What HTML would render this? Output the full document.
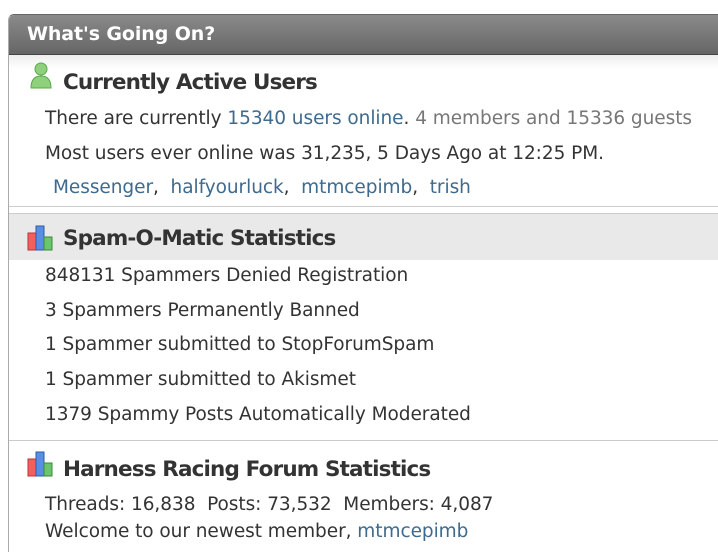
<!DOCTYPE html>
<html style="overflow:hidden"><head><style>
html,body{margin:0;width:718px;height:552px;overflow:hidden}
body{background:#fff;position:relative;font-family:"DejaVu Sans","Liberation Sans",sans-serif;color:#333}
.box{position:absolute;left:8px;top:14px;width:720px;height:540px;border-left:1px solid #aaa;border-top:1px solid #666;border-radius:6px 0 0 0;background:#fff}
.hdr{position:absolute;left:9px;top:15px;width:720px;height:39px;background:linear-gradient(#8a8a8a,#666);border-radius:5px 0 0 0;border-bottom:1px solid #444}
.hdr span{position:absolute;left:18px;top:8px;color:#fff;font-weight:bold;font-size:19px;letter-spacing:-0.1px}
.t{position:absolute;white-space:nowrap;font-size:18.5px;letter-spacing:-0.05px}
.h{position:absolute;white-space:nowrap;font-size:21.5px;font-weight:bold;color:#333;letter-spacing:-0.85px}
a{color:#3e6a8e;text-decoration:none}
.g{color:#777}
.line{position:absolute;left:9px;width:710px;height:1px;background:#ccc}
</style></head><body>
<div class="box"></div>
<div class="hdr"><span>What's Going On?</span></div>
<div style="position:absolute;left:9px;top:55px;width:710px;height:14px;background:linear-gradient(#eee,#fff)"></div>
<svg style="position:absolute;left:29px;top:61px" width="24" height="30"><circle cx="12" cy="8" r="6" fill="#8fd07c" stroke="#5aa94a"/><path d="M2 27 Q2 15 12 15 Q22 15 22 27 Z" fill="#8fd07c" stroke="#5aa94a"/></svg>
<div class="h" style="left:63px;top:70px">Currently Active Users</div>
<div class="t" style="left:45px;top:108px">There are currently <a>15340 users online</a>. <span class="g">4 members and 15336 guests</span></div>
<div class="t" style="left:45px;top:143px">Most users ever online was 31,235, 5 Days Ago at 12:25 PM.</div>
<div class="t" style="left:53px;top:177px"><a>Messenger</a>, &nbsp;<a>halfyourluck</a>, &nbsp;<a>mtmcepimb</a>, &nbsp;<a>trish</a></div>
<div class="line" style="top:206px"></div>
<div class="line" style="top:213px"></div>
<div style="position:absolute;left:9px;top:214px;width:710px;height:46px;background:#e9e9e9"></div>
<svg style="position:absolute;left:27px;top:225px" width="28" height="26"><rect x="1" y="8" width="8" height="17" fill="#f06060" stroke="#b33"/><rect x="9" y="1" width="8" height="24" fill="#5a8ee0" stroke="#2a5cb0"/><rect x="17" y="12" width="8" height="13" fill="#6cc46c" stroke="#3a8a3a"/></svg>
<div class="h" style="left:63px;top:226px">Spam-O-Matic Statistics</div>
<div class="t" style="left:45px;top:265px">848131 Spammers Denied Registration</div>
<div class="t" style="left:45px;top:300px">3 Spammers Permanently Banned</div>
<div class="t" style="left:45px;top:334px">1 Spammer submitted to StopForumSpam</div>
<div class="t" style="left:45px;top:369px">1 Spammer submitted to Akismet</div>
<div class="t" style="left:45px;top:404px">1379 Spammy Posts Automatically Moderated</div>
<div class="line" style="top:440px"></div>
<svg style="position:absolute;left:27px;top:451px" width="28" height="26"><rect x="1" y="8" width="8" height="17" fill="#f06060" stroke="#b33"/><rect x="9" y="1" width="8" height="24" fill="#5a8ee0" stroke="#2a5cb0"/><rect x="17" y="12" width="8" height="13" fill="#6cc46c" stroke="#3a8a3a"/></svg>
<div class="h" style="left:63px;top:457px">Harness Racing Forum Statistics</div>
<div class="t" style="left:45px;top:494px">Threads: 16,838 &nbsp;Posts: 73,532 &nbsp;Members: 4,087</div>
<div class="t" style="left:45px;top:521px">Welcome to our newest member, <a>mtmcepimb</a></div>
</body></html>
